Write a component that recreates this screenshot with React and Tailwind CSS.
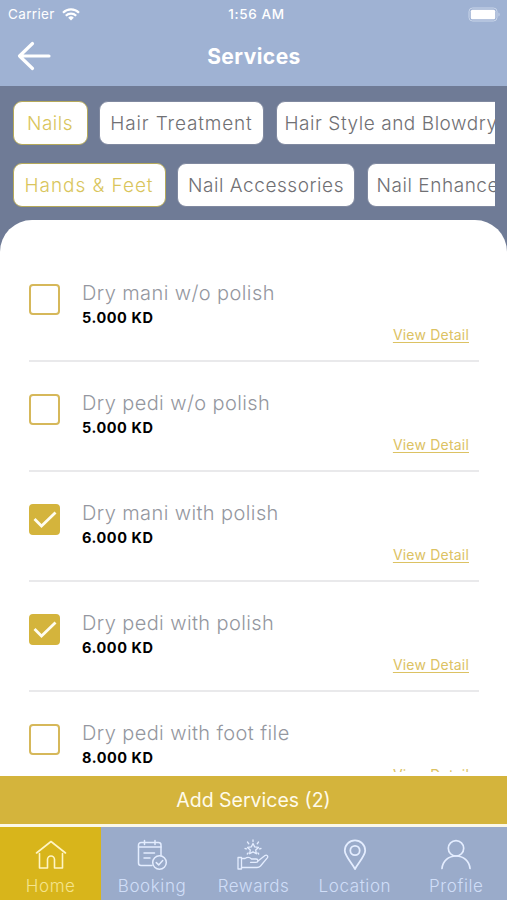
import { useState } from 'react';

const categories = [
  { name: 'Nails', box: 'w-[75px] justify-center', text: 'tracking-[0.5px]' },
  { name: 'Hair Treatment', box: 'w-[165px] justify-center', text: 'tracking-[0.85px]' },
  { name: 'Hair Style and Blowdry', box: 'w-[238px] pl-2', text: 'tracking-[0.55px]' },
];

const subCategories = [
  { name: 'Hands & Feet', box: 'w-[153px] justify-center', text: 'tracking-[0.95px]' },
  { name: 'Nail Accessories', box: 'w-[178px] justify-center', text: 'tracking-[0.55px]' },
  { name: 'Nail Enhancement', box: 'w-[190px] pl-[9px]', text: 'tracking-[0.55px]' },
];

const services = [
  { id: 1, name: 'Dry mani w/o polish', price: '5.000 KD' },
  { id: 2, name: 'Dry pedi w/o polish', price: '5.000 KD' },
  { id: 3, name: 'Dry mani with polish', price: '6.000 KD' },
  { id: 4, name: 'Dry pedi with polish', price: '6.000 KD' },
  { id: 5, name: 'Dry pedi with foot file', price: '8.000 KD' },
];

function HomeIcon() {
  return (
    <svg width="32" height="32" viewBox="0 0 32 32" fill="none" stroke="currentColor" strokeWidth="1.600" strokeLinecap="round" strokeLinejoin="round">
      <path d="M1.500 14 16 2.500 30.500 14" />
      <path d="M4.500 14.500V29H12.500V20.500a3.500 3.500 0 0 1 7 0V29H27.500V14.500" />
    </svg>
  );
}

function BookingIcon() {
  return (
    <svg width="32" height="32" viewBox="0 0 32 32" fill="none" stroke="currentColor" strokeWidth="1.500" strokeLinecap="round" strokeLinejoin="round">
      <path d="M16 26.500H5a2.500 2.500 0 0 1-2.500-2.500V6A2.500 2.500 0 0 1 5 3.500H22.500A2.500 2.500 0 0 1 25 6V16.500" />
      <path d="M2.500 8H25M8.500 1.500V5.500M19 1.500V5.500M8 14H18.500M8 19H14" />
      <circle cx="23.500" cy="23.500" r="6.800" />
      <path d="m20.300 23.600 2.400 2.300 4-4.300" />
    </svg>
  );
}

function RewardsIcon() {
  return (
    <svg width="32" height="32" viewBox="0 0 32 32" fill="none" stroke="currentColor" strokeWidth="1.300" strokeLinecap="round" strokeLinejoin="round">
      <path d="m16 4.500 1.700 3.400 3.800.5-2.800 2.600.7 3.800-3.400-1.900-3.400 1.900.7-3.800-2.800-2.600 3.800-.5Z" />
      <path d="M16 1v1.500M10.500 3l1.300 1.800M21.500 3l-1.300 1.800M8 9.500l1.500.3M24 9.500l-1.500.3M10.300 15l.8-1M21.700 15l-.8-1" />
      <path d="M1 18.500H4.500V30H1ZM4.500 19.500H8C11 17.500 13 18.500 14.500 20H19c2.500 0 2.500 3.300 0 3.300H13.500" />
      <path d="M21 22 28 16.500c1.800-1.200 3.500.7 2.300 2.300L23.500 27c-1 1-2 1.500-3.500 1.500H4.500" />
    </svg>
  );
}

function LocationIcon() {
  return (
    <svg width="32" height="32" viewBox="0 0 32 32" fill="none" stroke="currentColor" strokeWidth="1.800" strokeLinejoin="round">
      <path d="M16 30C13 24 5.800 17 5.800 11.500a10.200 10.200 0 0 1 20.400 0C26.200 17 19 24 16 30Z" />
      <circle cx="16" cy="11.500" r="4.700" />
    </svg>
  );
}

function ProfileIcon() {
  return (
    <svg width="32" height="32" viewBox="0 0 32 32" fill="none" stroke="currentColor" strokeWidth="1.700" strokeLinecap="round">
      <circle cx="16" cy="9.300" r="7.700" />
      <path d="M2 29.500c.8-7.500 6.500-12.500 14-12.500s13.200 5 14 12.500" />
    </svg>
  );
}

const tabs = [
  { name: 'Home', Icon: HomeIcon, text: 'tracking-[0.6px]' },
  { name: 'Booking', Icon: BookingIcon, text: 'tracking-[0.6px]' },
  { name: 'Rewards', Icon: RewardsIcon, text: 'tracking-[0.45px]' },
  { name: 'Location', Icon: LocationIcon, text: 'tracking-[0.6px]' },
  { name: 'Profile', Icon: ProfileIcon, text: 'tracking-[0.6px]' },
];

function ChipRow({ items }) {
  const [active, setActive] = useState(items[0].name);

  return (
    <div className="ml-[12.5px] mr-3 flex gap-[11.5px] overflow-hidden">
      {items.map((item) => (
        <button
          key={item.name}
          onClick={() => setActive(item.name)}
          className={`flex h-11 shrink-0 items-center whitespace-nowrap rounded-[9px] border bg-white pt-[3px] text-[19px] font-light ${item.box} ${item.text} ${
            active === item.name ? 'border-[#b5a95a] text-[#d9c55c]' : 'border-[#8089a0] text-[#707074]'
          }`}
        >
          {item.name}
        </button>
      ))}
    </div>
  );
}

function ServiceRow({ service, checked, onToggle }) {
  return (
    <div className="flex h-[110px] shrink-0 border-b-2 border-[#e9e9eb] pt-8">
      <button
        onClick={onToggle}
        className={`flex h-[31px] w-[31px] shrink-0 items-center justify-center rounded-[4px] border-2 ${
          checked ? 'border-[#d4b43c] bg-[#d4b43c]' : 'border-[#d6b85a] bg-white'
        }`}
      >
        {checked && (
          <svg className="shrink-0" width="24" height="18" viewBox="0 0 24 18" fill="none" stroke="#fffdf0" strokeWidth="2.800">
            <path d="M1.500 8 8.500 15 22.500 1.500" />
          </svg>
        )}
      </button>
      <div className="ml-[22px] flex-1">
        <h3 className="-mt-[3px] h-6 whitespace-nowrap text-[20px] leading-6 font-light tracking-[0.4px] text-[#9497a0]">
          {service.name}
        </h3>
        <p className="mt-1 h-[17px] text-[14.500px] leading-[18px] font-bold tracking-[0.55px] text-black">
          {service.price}
        </p>
        <div className="mr-2.5 flex justify-end">
          <a className="h-[18px] text-[14px] leading-[18px] tracking-[0.2px] text-[#dcc263] underline underline-offset-2">
            View Detail
          </a>
        </div>
      </div>
    </div>
  );
}

export default function App() {
  const [selected, setSelected] = useState([3, 4]);

  const toggle = (id) => {
    setSelected((prev) => (prev.includes(id) ? prev.filter((s) => s !== id) : [...prev, id]));
  };

  return (
    <div className="flex h-[900px] w-[507px] flex-col overflow-hidden bg-[#6f7b96] font-['Inter','Liberation_Sans',sans-serif]">
      {/* Status bar and header */}
      <header className="h-[86px] shrink-0 bg-[#9fb2d3] text-white">
        <div className="grid h-7 grid-cols-3 items-center pl-2 pr-1.5 text-[13.500px]">
          <div className="flex items-center gap-[7px]">
            <span className="tracking-[0.35px]">Carrier</span>
            <svg width="18" height="13" viewBox="0 0 18 13" fill="none" stroke="currentColor" strokeWidth="2.200">
              <path d="M1 4.700a11.500 11.500 0 0 1 16 0M3.800 7.700a7.500 7.500 0 0 1 10.400 0" />
              <path d="M9 12.500 6.200 9.700a4 4 0 0 1 5.600 0Z" fill="currentColor" stroke="none" />
            </svg>
          </div>
          <span className="pl-1 text-center font-medium tracking-[0.6px]">1:56 AM</span>
          <svg className="justify-self-end" width="33" height="15" viewBox="0 0 33 15">
            <rect x="1" y="1" width="28" height="13" rx="3.500" fill="none" stroke="#c9d5e9" />
            <rect x="2.800" y="2.800" width="24.400" height="9.400" rx="1.500" fill="white" />
            <path d="M30.500 5.500c1.500.6 1.500 3.400 0 4Z" fill="#c9d5e9" />
          </svg>
        </div>
        <div className="grid h-14 grid-cols-3 items-center px-[17px]">
          <svg width="34" height="30" viewBox="0 0 34 30" fill="none" stroke="currentColor" strokeWidth="3.200" strokeLinecap="round" strokeLinejoin="round">
            <path d="M32 15H2.500M15.500 2.500 2.500 15 15.500 27.500" />
          </svg>
          <h1 className="pt-0.5 pl-px text-center text-[21px] font-bold tracking-[0.45px]">Services</h1>
        </div>
      </header>

      {/* Category filters */}
      <div className="flex h-[134px] shrink-0 flex-col gap-[17.5px] pt-[15px]">
        <ChipRow items={categories} />
        <ChipRow items={subCategories} />
      </div>

      {/* Service list */}
      <main className="flex h-[556px] shrink-0 flex-col overflow-hidden rounded-t-[32px] bg-white pt-8 pr-7 pb-1 pl-[29px]">
        <div className="flex min-h-0 flex-1 flex-col overflow-hidden">
          {services.map((service) => (
            <ServiceRow
              key={service.id}
              service={service}
              checked={selected.includes(service.id)}
              onToggle={() => toggle(service.id)}
            />
          ))}
        </div>
      </main>

      <button className="h-12 shrink-0 bg-[#d4b43c] pt-0.5 text-[19.500px] text-[#fffbea]">
        Add Services ({selected.length})
      </button>

      {/* Tab bar */}
      <nav className="grid h-[76px] shrink-0 grid-cols-5 border-t-[3px] border-[#fbf8e8] bg-[#9aabca]">
        {tabs.map(({ name, Icon, text }, i) => (
          <div
            key={name}
            className={`flex flex-col items-center pt-3 ${i === 0 ? 'bg-[#d8b51b] text-[#fff5c4]' : 'text-[#e4edff]'}`}
          >
            <Icon />
            <span className={`mt-[3px] text-[17px] leading-6 font-light ${text} ${i === 0 ? 'text-[#f5e48c]' : 'text-[#d0def8]'}`}>
              {name}
            </span>
          </div>
        ))}
      </nav>
    </div>
  );
}
